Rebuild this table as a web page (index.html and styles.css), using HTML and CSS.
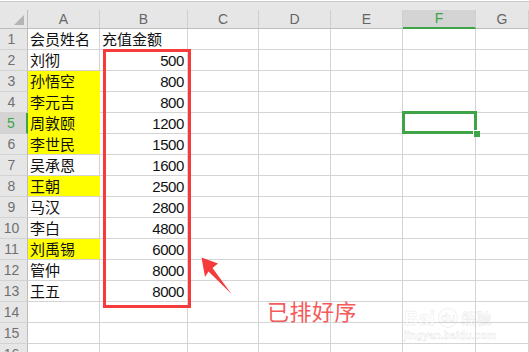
FILE: index.html
```html
<!DOCTYPE html>
<html lang="zh">
<head>
<meta charset="utf-8">
<title>充值金额</title>
<link rel="stylesheet" href="styles.css">
</head>
<body>
<div class="sheet">
  <div class="topbar"></div>
  <table class="grid">
    <colgroup>
      <col class="w-row"><col class="w-a"><col class="w-b"><col class="w-c"><col class="w-d"><col class="w-e"><col class="w-f"><col class="w-g">
    </colgroup>
    <thead>
      <tr class="head">
        <th class="corner"><span class="tri"></span></th>
        <th>A</th><th>B</th><th>C</th><th>D</th><th>E</th><th class="sel-col">F</th><th>G</th>
      </tr>
    </thead>
    <tbody>
      <tr><th>1</th><td>会员姓名</td><td>充值金额</td><td></td><td></td><td></td><td></td><td></td></tr>
      <tr><th>2</th><td>刘彻</td><td class="num">500</td><td></td><td></td><td></td><td></td><td></td></tr>
      <tr><th>3</th><td class="hl join">孙悟空</td><td class="num">800</td><td></td><td></td><td></td><td></td><td></td></tr>
      <tr><th>4</th><td class="hl join">李元吉</td><td class="num">800</td><td></td><td></td><td></td><td></td><td></td></tr>
      <tr><th class="sel-row">5</th><td class="hl join">周敦颐</td><td class="num">1200</td><td></td><td></td><td></td><td></td><td></td></tr>
      <tr><th>6</th><td class="hl">李世民</td><td class="num">1500</td><td></td><td></td><td></td><td></td><td></td></tr>
      <tr><th>7</th><td>吴承恩</td><td class="num">1600</td><td></td><td></td><td></td><td></td><td></td></tr>
      <tr><th>8</th><td class="hl">王朝</td><td class="num">2500</td><td></td><td></td><td></td><td></td><td></td></tr>
      <tr><th>9</th><td>马汉</td><td class="num">2800</td><td></td><td></td><td></td><td></td><td></td></tr>
      <tr><th>10</th><td>李白</td><td class="num">4800</td><td></td><td></td><td></td><td></td><td></td></tr>
      <tr><th>11</th><td class="hl">刘禹锡</td><td class="num">6000</td><td></td><td></td><td></td><td></td><td></td></tr>
      <tr><th>12</th><td>管仲</td><td class="num">8000</td><td></td><td></td><td></td><td></td><td></td></tr>
      <tr><th>13</th><td>王五</td><td class="num">8000</td><td></td><td></td><td></td><td></td><td></td></tr>
      <tr><th>14</th><td></td><td></td><td></td><td></td><td></td><td></td><td></td></tr>
      <tr><th>15</th><td></td><td></td><td></td><td></td><td></td><td></td><td></td></tr>
      <tr><th>16</th><td></td><td></td><td></td><td></td><td></td><td></td><td></td></tr>
    </tbody>
  </table>

  <div class="active-cell"><span class="handle"></span></div>
  <div class="mark-box"></div>
  <svg class="mark-arrow" width="40" height="46" viewBox="0 0 40 46" aria-hidden="true">
    <polygon points="3.5,3.5 20,9.5 14.5,14 33.5,40 10.5,17.5 7,23" fill="#f53b3b"/>
  </svg>
  <div class="note">已排好序</div>

  <div class="watermark">
    <div class="wm-top"><span class="wm-bai">Bai</span><span class="wm-paw">du</span><span class="wm-jy">经验</span></div>
    <div class="wm-url">jingyan.baidu.com</div>
  </div>
</div>
</body>
</html>
```

FILE: styles.css
```css
* { box-sizing: border-box; }

body {
  margin: 0;
  background: #fff;
  font-family: "Liberation Sans", "Noto Sans CJK SC", sans-serif;
}

.sheet {
  position: relative;
  width: 529px;
  height: 352px;
  overflow: hidden;
}

.topbar {
  margin-top: 1px;
  height: 9px;
  border-top: 1px solid #c9c9c9;
  background: #e6e6e6;
}

.grid {
  border-collapse: separate;
  border-spacing: 0;
  table-layout: fixed;
  width: 529px;
}

.w-row { width: 28px; }
.w-a { width: 72px; }
.w-b { width: 88px; }
.w-c { width: 71px; }
.w-d { width: 72px; }
.w-e { width: 72px; }
.w-f { width: 73px; }
.w-g { width: 53px; }

.head { height: 18px; }
tbody tr { height: 21px; }

thead th {
  background: #e6e6e6;
  border-right: 1px solid #cfcfcf;
  border-bottom: 1px solid #bdbdbd;
  color: #666;
  font-weight: normal;
  font-size: 14px;
  line-height: 17px;
  padding: 0;
  text-align: center;
}

thead th.corner {
  position: relative;
  border-right: 1px solid #bdbdbd;
}

.tri {
  position: absolute;
  right: 3px;
  bottom: 3px;
  width: 0;
  height: 0;
  border-left: 10px solid transparent;
  border-bottom: 10px solid #b4b4b4;
}

thead th.sel-col {
  background: #d4d4d4;
  border-bottom: 2px solid #3fa447;
  color: #3fa447;
}

tbody th {
  background: #e6e6e6;
  border-right: 1px solid #bdbdbd;
  border-bottom: 1px solid #d3d3d3;
  color: #707070;
  font-weight: normal;
  font-size: 14px;
  line-height: 19px;
  padding: 0 4px 0 0;
  text-align: center;
  vertical-align: bottom;
}

tbody th.sel-row {
  background: #d4d4d4;
  border-right: 2px solid #3fa447;
  color: #3fa447;
}

td {
  border-right: 1px solid #d4d4d4;
  border-bottom: 1px solid #d4d4d4;
  padding: 0 3px 0 2px;
  font-size: 15px;
  line-height: 19px;
  color: #111;
  white-space: nowrap;
  overflow: hidden;
  vertical-align: bottom;
}

td.num {
  text-align: right;
  font-size: 15px;
  letter-spacing: -0.4px;
}

td.hl {
  background: #ffff00;
  border-right-color: #ffff00;
}

td.hl.join {
  border-bottom-color: #ffff00;
}

.active-cell {
  position: absolute;
  left: 402px;
  top: 111px;
  width: 75px;
  height: 23px;
  border: 3px solid #3fa447;
}

.handle {
  position: absolute;
  right: -6px;
  bottom: -6px;
  width: 7px;
  height: 7px;
  background: #3fa447;
  border-left: 1px solid #fff;
  border-top: 1px solid #fff;
}

.mark-box {
  position: absolute;
  left: 103px;
  top: 49px;
  width: 88px;
  height: 259px;
  border: 3px solid #f53b3b;
}

.mark-arrow {
  position: absolute;
  left: 198px;
  top: 254px;
}

.note {
  position: absolute;
  left: 267px;
  top: 295px;
  font-family: "Noto Sans CJK SC", sans-serif;
  font-size: 22px;
  line-height: 30px;
  color: #f65a5a;
  letter-spacing: 0.5px;
}

.watermark {
  position: absolute;
  left: 404px;
  top: 300px;
  width: 100px;
  color: rgba(255, 255, 255, 0.5);
  -webkit-text-stroke: 1px rgba(0, 0, 0, 0.07);
}

.wm-top {
  display: flex;
  align-items: flex-end;
  gap: 3px;
  height: 28px;
}

.wm-bai {
  font-size: 20px;
  font-weight: bold;
  line-height: 20px;
}

.wm-paw {
  font-size: 12px;
  font-weight: bold;
  line-height: 18px;
  width: 20px;
  text-align: center;
  border: 1px solid rgba(0, 0, 0, 0.06);
  border-radius: 50%;
}

.wm-jy {
  font-family: "Noto Sans CJK SC", sans-serif;
  font-size: 15px;
  font-weight: bold;
  line-height: 20px;
}

.wm-url {
  font-size: 10.5px;
  font-weight: bold;
  line-height: 12px;
  margin-top: 1px;
}
```
